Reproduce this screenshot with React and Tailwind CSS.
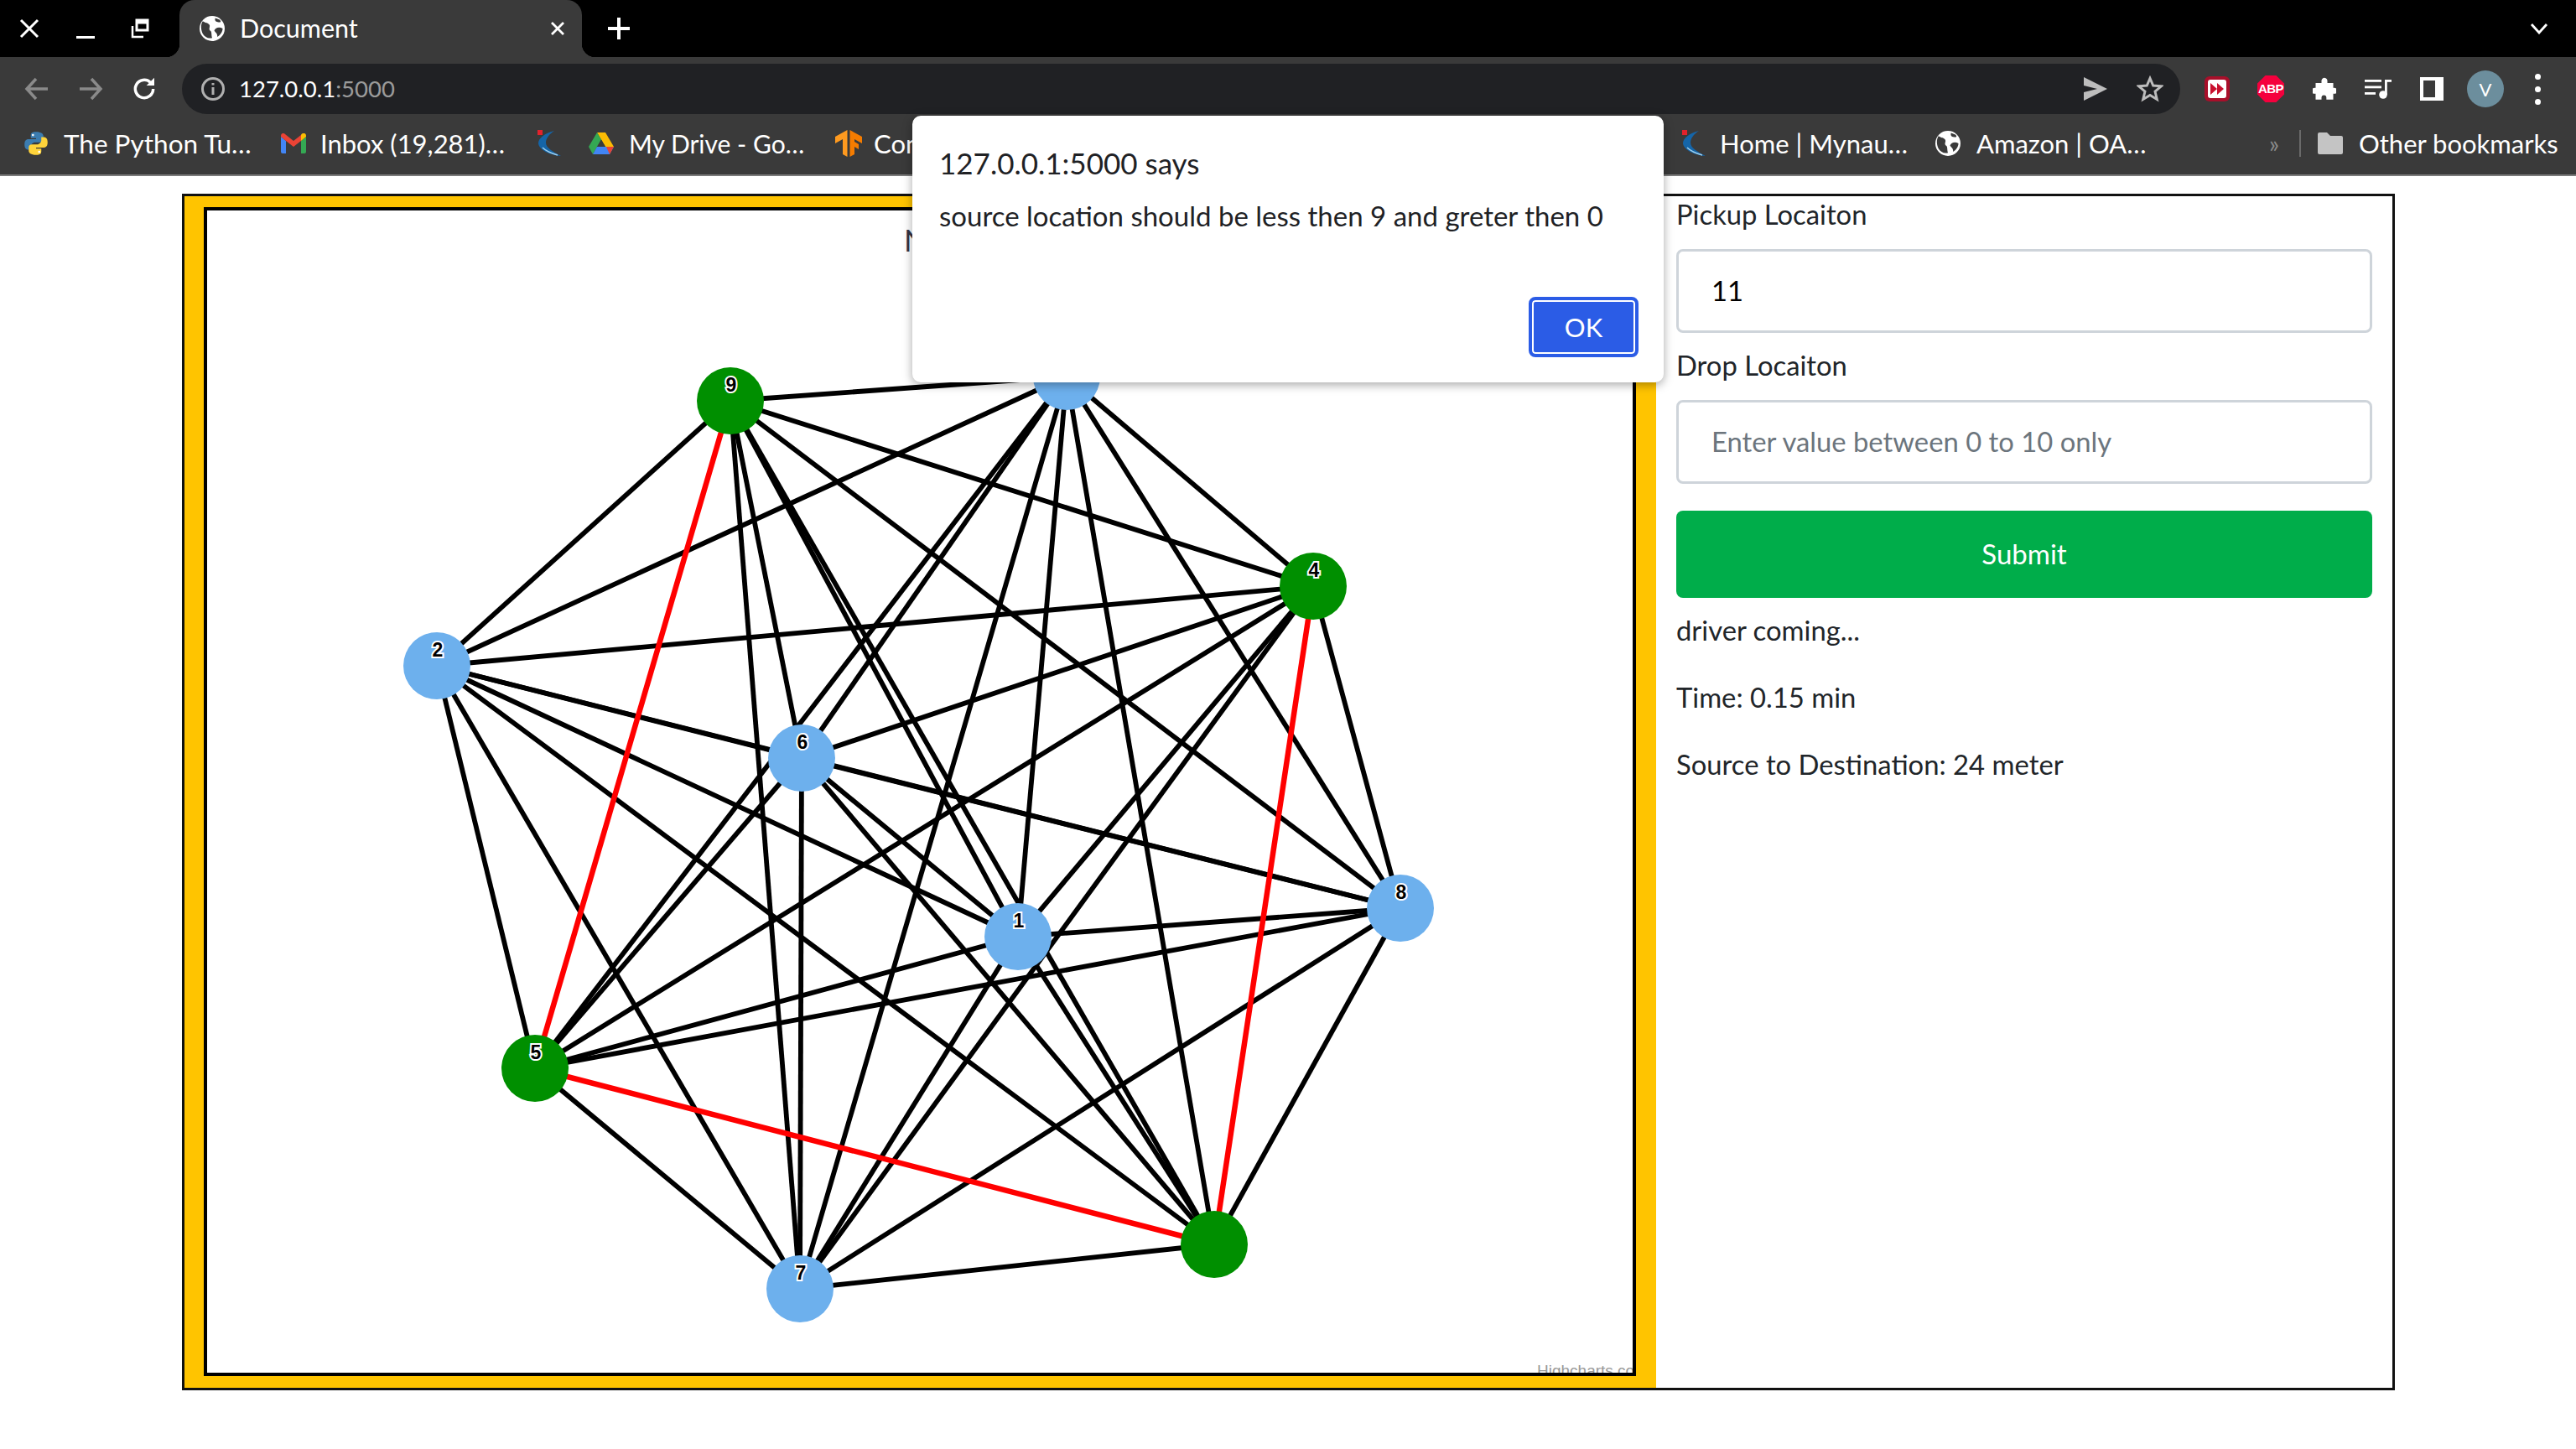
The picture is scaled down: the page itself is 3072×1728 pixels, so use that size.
const FONT = "font-['Lato','Noto_Sans',sans-serif]";

const nodes = {
  0: [1448, 1484, 'g'], 1: [1214, 1117, 'b'], 2: [521, 794, 'b'], 3: [1272, 449, 'b'], 4: [1566, 699, 'g'],
  5: [638, 1274, 'g'], 6: [956, 904, 'b'], 7: [954, 1537, 'b'], 8: [1670, 1083, 'b'], 9: [871, 478, 'g'],
};
const red = new Set(['5-9', '0-5', '0-4']);
const keys = Object.keys(nodes).map(Number);
const edges = [];
keys.forEach((a) => keys.forEach((b) => { if (a < b) edges.push([a, b]); }));

function Chart() {
  return (
    <svg viewBox="247 251 1700 1386" width="1700" height="1386" className="block">
      <text x="1078" y="300" fontSize="36" fill="#333344" fontFamily="Lato, sans-serif">N</text>
      {edges.filter(([a, b]) => !red.has(`${a}-${b}`)).map(([a, b]) => (
        <line key={`${a}-${b}`} x1={nodes[a][0]} y1={nodes[a][1]} x2={nodes[b][0]} y2={nodes[b][1]} stroke="#000" strokeWidth="5.800" />
      ))}
      {edges.filter(([a, b]) => red.has(`${a}-${b}`)).map(([a, b]) => (
        <line key={`${a}-${b}`} x1={nodes[a][0]} y1={nodes[a][1]} x2={nodes[b][0]} y2={nodes[b][1]} stroke="#ff0000" strokeWidth="6.500" />
      ))}
      {keys.map((k) => (
        <circle key={k} cx={nodes[k][0]} cy={nodes[k][1]} r="40" fill={nodes[k][2] === 'g' ? '#008f00' : '#6db0ed'} />
      ))}
      {keys.filter((k) => k !== 0).map((k) => (
        <text key={k} x={nodes[k][0] + 1} y={nodes[k][1] - 11} textAnchor="middle" fontSize="23" fontWeight="700" fill="#000" stroke="#fff" strokeWidth="4" paintOrder="stroke" fontFamily="'Liberation Sans', sans-serif">{k}</text>
      ))}
      <text x="1833" y="1641" fontSize="19" fill="#999" fontFamily="'Liberation Sans', sans-serif">Highcharts.com</text>
    </svg>
  );
}

function Globe({ size = 30 }) {
  return (
    <svg width={size} height={size} viewBox="0 0 24 24" className="shrink-0">
      <circle cx="12" cy="12" r="12" fill="#fff" />
      <path d="M3 5 C6 7 7 6 9 8 C11 10 8 12 10 14 C12 15 11 18 12 21 C8 22 5 20 3 17 C1 13 1 8 3 5Z M15 2 C14 5 16 6 19 6 C21 6 20 4 19 3.500Z M22 12 C19 10 15 11 14 14 C15 16 17 16 17 20 C20 18 22 15 22 12Z" fill="#3a3a3a" />
    </svg>
  );
}

function Python() {
  return (
    <svg width="30" height="32" viewBox="0 0 24 24" className="shrink-0">
      <path d="M12 1C7 1 7 3 7 5v2h5v1H5C2 8 1 10 1 13s1 5 4 5h2v-3c0-2 2-4 4-4h5c2 0 3-1 3-3V5c0-2-2-4-7-4z" fill="#3b7cb0" />
      <circle cx="9" cy="4" r="1.100" fill="#fff" />
      <path d="M12 23c5 0 5-2 5-4v-2h-5v-1h7c3 0 4-2 4-5s-1-5-4-5h-2v3c0 2-2 4-4 4H8c-2 0-3 1-3 3v3c0 2 2 4 7 4z" fill="#ffd43b" />
      <circle cx="15" cy="20" r="1.100" fill="#fff" />
    </svg>
  );
}

function Gmail() {
  return (
    <svg width="30" height="24" viewBox="0 0 30 24" className="shrink-0">
      <path d="M0 4 L0 22 Q0 24 2 24 L6 24 L6 9Z" fill="#4285f4" />
      <path d="M24 9 L24 24 L28 24 Q30 24 30 22 L30 4Z" fill="#34a853" />
      <path d="M0 3 C0 0 3 -1 5 1 L15 9 L24 2 L24 9 L15 16 L6 9 L0 4Z" fill="#ea4335" />
      <path d="M24 9 L24 2 C25 -1 30 -1 30 3 L30 4Z" fill="#fbbc04" />
    </svg>
  );
}

function Crescent() {
  return (
    <svg width="30" height="32" viewBox="0 0 30 32" className="shrink-0">
      <path d="M21 1 C9 4 2 10 2 16 C3 24 16 30 29 31 C20 26 11 22 11 15 C11 10 15 5 21 1Z" fill="#1565a8" />
      <path d="M7 21 C11 25 18 28 25 30" stroke="#9fd0ee" strokeWidth="1.500" fill="none" />
      <rect x="1" y="0" width="6" height="6" fill="#e3222c" />
    </svg>
  );
}

function Drive() {
  return (
    <svg width="30" height="26" viewBox="0 0 30 26" className="shrink-0">
      <path d="M10 0 H20 L30 17 H20Z" fill="#fbbc04" />
      <path d="M10 0 L15 8.500 L5 26 L0 17Z" fill="#34a853" />
      <path d="M10 17 H30 L25 26 H5Z" fill="#4285f4" />
      <path d="M25 26 L30 17 L21 17Z" fill="#ea4335" />
      <path d="M15 8.500 L20 17 H10Z" fill="#3a3a3a" />
    </svg>
  );
}

function Orange() {
  return (
    <svg width="32" height="32" viewBox="0 0 32 32" className="shrink-0">
      <path d="M14.500 0 L0 8 V16 L9 11 V29 L14.500 32Z" fill="#ff9a1f" />
      <path d="M17.500 0 L32 8 V16 L23 11 V14 L28 17 V23 L23 20 V29 L17.500 32Z" fill="#f57c00" />
    </svg>
  );
}

function Bookmark({ icon, text, w, gap = 'gap-[18px]', size = 'text-[31px]' }) {
  return (
    <div className={`flex items-center shrink-0 ${gap}`} style={{ width: w }}>
      {icon}
      <span className={`${size} leading-[40px] text-white whitespace-nowrap`}>{text}</span>
    </div>
  );
}

function TabBar() {
  return (
    <div className="h-[68px] bg-black flex items-center relative shrink-0">
      <svg width="24" height="24" viewBox="0 0 24 24" className="ml-[23px] shrink-0" stroke="#fff" strokeWidth="3">
        <path d="M2 2 L22 22 M22 2 L2 22" />
      </svg>
      <div className="w-[22px] h-[3px] bg-white ml-[44px] mt-[20px] shrink-0" />
      <svg width="24" height="24" viewBox="0 0 24 24" className="ml-[42px] shrink-0" fill="none" stroke="#fff" strokeWidth="2.500">
        <path d="M8 2 H21 V14 H8Z M8 5 H21" strokeWidth="3" />
        <path d="M3 9 V22 H16" />
      </svg>
      <div className="relative ml-[35px] w-[480px] h-[68px] bg-[#3a3a3a] rounded-t-[18px] flex items-center pl-[24px] pr-[20px] shrink-0 self-start">
        <div className="absolute bottom-0 left-[-16px] w-[16px] h-[16px] bg-[radial-gradient(circle_at_0_0,#000_16px,#3a3a3a_16.500px)]" />
        <div className="absolute bottom-0 right-[-16px] w-[16px] h-[16px] bg-[radial-gradient(circle_at_100%_0,#000_16px,#3a3a3a_16.500px)]" />
        <Globe />
        <span className="ml-[18px] text-[30.500px] text-white flex-1">Document</span>
        <svg width="18" height="18" viewBox="0 0 18 18" stroke="#fff" strokeWidth="2.800"><path d="M2 2 L16 16 M16 2 L2 16" /></svg>
      </div>
      <svg width="28" height="28" viewBox="0 0 28 28" className="ml-[30px] shrink-0" stroke="#fff" strokeWidth="4"><path d="M14 1 V27 M1 14 H27" /></svg>
      <div className="flex-1" />
      <svg width="22" height="14" viewBox="0 0 22 14" className="mr-[33px] shrink-0" fill="none" stroke="#fff" strokeWidth="2.800"><path d="M2 2 L11 12 L20 2" /></svg>
    </div>
  );
}

function ToolBar() {
  return (
    <div className="h-[76px] bg-[#3a3a3a] flex items-center shrink-0">
      <svg width="30" height="30" viewBox="0 0 30 30" className="ml-[29px] shrink-0" fill="none" stroke="#8a8a8a" strokeWidth="3.500"><path d="M28 15 H3 M14 3 L3 15 L14 27" /></svg>
      <svg width="30" height="30" viewBox="0 0 30 30" className="ml-[34px] shrink-0" fill="none" stroke="#8a8a8a" strokeWidth="3.500"><path d="M2 15 H27 M16 3 L27 15 L16 27" /></svg>
      <svg width="32" height="32" viewBox="0 0 24 24" className="ml-[33px] shrink-0" fill="none" stroke="#fff" strokeWidth="2.600"><path d="M20 12 A8 8 0 1 1 17.500 6.200" /><path d="M21 2 V9 H14Z" fill="#fff" stroke="none" /></svg>
      <div className="ml-[29px] w-[2383px] h-[60px] bg-[#202124] rounded-full flex items-center pl-[22px] pr-[20px] shrink-0">
        <svg width="30" height="30" viewBox="0 0 30 30" className="shrink-0" fill="none" stroke="#b0b0b0" strokeWidth="3"><circle cx="15" cy="15" r="12.500" /><path d="M15 13 V22 M15 8 V10.500" /></svg>
        <span className="ml-[16px] text-[27.500px] text-white">127.0.0.1<span className="text-[#9a9a9a]">:5000</span></span>
        <div className="flex-1" />
        <svg width="30" height="28" viewBox="0 0 30 28" className="shrink-0"><path d="M1 0 L29 14 L1 28 L1 18 L17 14 L1 10Z" fill="#bdbdbd" /></svg>
        <svg width="32" height="32" viewBox="0 0 24 24" className="ml-[34px] shrink-0" fill="none" stroke="#bdbdbd" strokeWidth="2.200"><path d="M12 2.500 L14.800 9 L22 9.600 L16.500 14.300 L18.200 21.300 L12 17.600 L5.800 21.300 L7.500 14.300 L2 9.600 L9.200 9Z" /></svg>
      </div>
      <div className="ml-[29px] w-[30px] h-[30px] bg-[#a80f2a] rounded-[6px] flex items-center justify-center shrink-0">
        <div className="w-[22px] h-[22px] bg-white rounded-[3px] flex items-center justify-center">
          <svg width="16" height="14" viewBox="0 0 16 14" fill="#c8102e"><path d="M0 0 L8 7 L0 14Z M8 0 L16 7 L8 14Z" /></svg>
        </div>
      </div>
      <div className="ml-[33px] w-[32px] h-[32px] bg-[#f5003d] flex items-center justify-center shrink-0 text-white text-[15px] font-bold tracking-[-0.5px] font-['Liberation_Sans',sans-serif] [clip-path:polygon(30%_0,70%_0,100%_30%,100%_70%,70%_100%,30%_100%,0_70%,0_30%)]">ABP</div>
      <svg width="28" height="28" viewBox="0 0 24 24" className="ml-[34px] shrink-0" fill="#fff"><path d="M10 1.500 A3 3 0 0 1 15 4 V6 H21 V11 H22 A3 3 0 0 1 22 17 H21 V23 H14 V21 A2.500 2.500 0 0 0 9 21 V23 H3 V17 H2 A3 3 0 0 1 2 11 H3 V6 H9 V4 A3 3 0 0 1 10 1.500Z" /></svg>
      <svg width="32" height="24" viewBox="0 0 32 24" className="ml-[34px] shrink-0" fill="#fff"><rect x="0" y="1" width="20" height="2.800" /><rect x="0" y="8.500" width="20" height="2.800" /><rect x="0" y="16" width="13" height="2.800" /><rect x="24" y="1" width="2.800" height="18" /><rect x="24" y="1" width="8" height="2.800" /><circle cx="22" cy="19" r="4.800" /></svg>
      <div className="ml-[34px] w-[28px] h-[28px] border-[4px] border-white border-r-[10px] shrink-0" />
      <div className="ml-[28px] w-[44px] h-[44px] rounded-full bg-[#6c8e9d] text-white text-[22px] flex items-center justify-center shrink-0">V</div>
      <div className="ml-[37px] flex flex-col gap-[8px] shrink-0">
        <div className="w-[7px] h-[7px] rounded-full bg-white" />
        <div className="w-[7px] h-[7px] rounded-full bg-white" />
        <div className="w-[7px] h-[7px] rounded-full bg-white" />
      </div>
    </div>
  );
}

function BookmarkBar() {
  return (
    <div className="h-[66px] bg-[#3a3a3a] flex items-center pl-[28px] pb-[10px] border-b-[2px] border-[#7b7b7b] shrink-0">
      <Bookmark icon={<Python />} text="The Python Tu…" w={307} size="text-[31.500px]" />
      <Bookmark icon={<Gmail />} text="Inbox (19,281)…" w={305} gap="gap-[17px]" />
      <div className="w-[62px] shrink-0"><Crescent /></div>
      <Bookmark icon={<Drive />} text="My Drive - Go…" w={294} gap="gap-[18px]" size="text-[30px]" />
      <Bookmark icon={<Orange />} text="Con" w={1009} gap="gap-[14px]" />
      <Bookmark icon={<Crescent />} text="Home | Mynau…" w={303} gap="gap-[16px]" />
      <Bookmark icon={<Globe size={30} />} text="Amazon | OA…" w={396} gap="gap-[19px]" />
      <span className="w-[38px] pl-[2px] text-[#8a8a8a] text-[28px] leading-[32px] shrink-0">»</span>
      <div className="w-[2px] h-[32px] bg-[#6a6a6a] shrink-0" />
      <svg width="30" height="26" viewBox="0 0 30 26" className="ml-[20px] shrink-0" fill="#c4c4c4"><path d="M2 0 H11 L15 4 H28 Q30 4 30 6 V24 Q30 26 28 26 H2 Q0 26 0 24 V2 Q0 0 2 0Z" /></svg>
      <span className="ml-[19px] text-[31px] leading-[40px] text-white whitespace-nowrap">Other bookmarks</span>
    </div>
  );
}

function Dialog() {
  return (
    <div className="absolute left-[1088px] top-[138px] w-[896px] h-[318px] bg-white rounded-[10px] shadow-[0_3px_12px_rgba(0,0,0,0.35)] pl-[32px] pr-[30px] pt-[33px] flex flex-col">
      <div className="text-[35px] leading-[46px] text-[#202124]">127.0.0.1:5000 says</div>
      <div className="text-[33px] leading-[44px] mt-[18px] text-[#202124] whitespace-nowrap">source location should be less then 9 and greter then 0</div>
      <button className="self-end mt-[75px] w-[131px] h-[72px] bg-[#2b5ce6] rounded-[8px] border-[4px] border-[#2b5ce6] ring-[2px] ring-inset ring-white text-white text-[31px]">OK</button>
    </div>
  );
}

function Field({ label, value, placeholder, className }) {
  return (
    <>
      <div className={`text-[32.800px] leading-[44px] text-[#212529] ${className}`}>{label}</div>
      <div className="h-[100px] mt-[19px] border-[3px] border-[#ced4da] rounded-[8px] flex items-center pl-[39px]">
        {value ? <span className="text-[32.800px] text-black">{value}</span> : <span className="text-[32.800px] text-[#6c757d]">{placeholder}</span>}
      </div>
    </>
  );
}

export default function App() {
  return (
    <div className={`relative w-[3072px] h-[1728px] bg-white overflow-hidden flex flex-col ${FONT}`}>
      <TabBar />
      <ToolBar />
      <BookmarkBar />
      <div className="mt-[21px] ml-[217px] w-[2639px] h-[1427px] border-[3px] border-[#111] flex">
        <div className="w-[1755px] h-full bg-[#ffc400] pl-[23px] pr-[24px] pt-[13px] pb-[14px] shrink-0">
          <div className="border-[4px] border-black bg-white overflow-hidden h-full">
            <Chart />
          </div>
        </div>
        <div className="flex-1 pl-[24px] pr-[24px] flex flex-col">
          <Field label="Pickup Locaiton" value="11" className="" />
          <Field label="Drop Locaiton" placeholder="Enter value between 0 to 10 only" className="mt-[17px]" />
          <button className="mt-[32px] h-[104px] bg-[#00ad4a] rounded-[8px] text-white text-[33px]">Submit</button>
          <div className="mt-[15px] flex flex-col gap-[32px] text-[32.800px] leading-[48px] text-[#212529]">
            <div>driver coming...</div>
            <div>Time: 0.15 min</div>
            <div>Source to Destination: 24 meter</div>
          </div>
        </div>
      </div>
      <Dialog />
    </div>
  );
}
